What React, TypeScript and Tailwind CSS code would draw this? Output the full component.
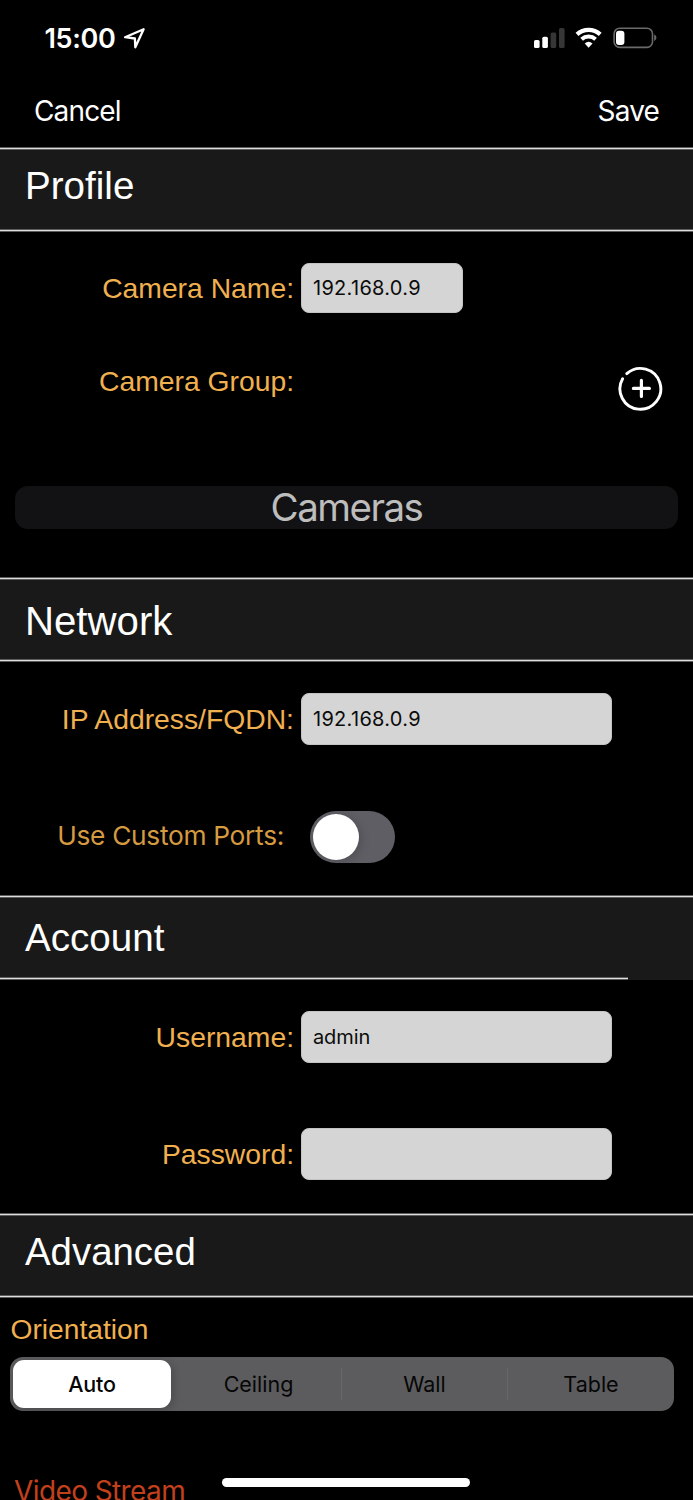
import type { ReactNode } from "react";
import clsx from "clsx";

const segments = ["Auto", "Ceiling", "Wall", "Table"];

function Rule({ className }: { className?: string }) {
  return <div className={clsx("h-[3px] border-y border-[#5c5c5c] bg-[#dedede]", className)} />;
}

function SectionHeader({
  title,
  className,
  ruleClassName,
}: {
  title: string;
  className: string;
  ruleClassName?: string;
}) {
  return (
    <header className="flex h-[85px] flex-col bg-[#191919]">
      <Rule />
      <h2
        className={clsx(
          "h-[79px] whitespace-nowrap pl-[25px] font-['Liberation_Sans',sans-serif] leading-[40px] text-white",
          className,
        )}
      >
        {title}
      </h2>
      <Rule className={ruleClassName} />
    </header>
  );
}

function Field({
  label,
  className,
  children,
}: {
  label: string;
  className?: string;
  children?: ReactNode;
}) {
  return (
    <div className={clsx("flex items-center", className)}>
      <span className="w-[295px] whitespace-nowrap pr-px text-right font-['Liberation_Sans',sans-serif] text-[28.3px] leading-8 text-[#f0b04f]">
        {label}
      </span>
      {children}
    </div>
  );
}

function TextBox({ value, className }: { value: string; className: string }) {
  return (
    <input
      readOnly
      value={value}
      className={clsx(
        "ml-[6.4px] rounded-lg border border-[#c4c4c4] bg-[#d5d5d5] pl-[10.6px] text-[20px] text-[#0c0c0c] outline-none",
        className,
      )}
    />
  );
}

function StatusBar() {
  return (
    <div className="flex h-[76px] items-center pl-[44.5px] pr-[36px] text-white">
      <span className="text-[27px] font-semibold leading-none tracking-[-0.3px]">15:00</span>
      <svg className="ml-[7px] h-[24px] w-[24px]" viewBox="0 0 24 24" fill="none">
        <path
          d="M20.6 3.2 2.1 11.2l9.8 1.3.4 8.8z"
          stroke="currentColor"
          strokeWidth="2.3"
          strokeLinejoin="round"
        />
      </svg>
      <svg className="ml-auto h-[24px] w-[124px]" viewBox="0 0 124 24" fill="none">
        <rect x="1" y="14" width="5.6" height="8" rx="1.6" fill="#fff" />
        <rect x="9.3" y="10.7" width="5.6" height="11.3" rx="1.6" fill="#fff" />
        <rect x="17.6" y="6.5" width="5.6" height="15.5" rx="1.6" fill="#363636" />
        <rect x="26" y="2" width="5.6" height="20" rx="1.6" fill="#363636" />
        <path d="M44 8.4a17.4 17.4 0 0 1 23.2 0" stroke="#fff" strokeWidth="4.3" />
        <path d="M48.6 13.2a10.6 10.6 0 0 1 14 0" stroke="#fff" strokeWidth="4" />
        <path d="M51.7 17.4a6.2 6.2 0 0 1 7.8 0l-3.9 4.3z" fill="#fff" />
        <rect x="81.1" y="2.2" width="38.4" height="19.2" rx="5.6" stroke="#6a6a6a" strokeWidth="1.6" />
        <rect x="83" y="4.8" width="8.4" height="14.2" rx="3" fill="#fff" />
        <path d="M121.2 8.6c2.9 1.3 2.9 5.1 0 6.4z" fill="#6a6a6a" />
      </svg>
    </div>
  );
}

function AddIcon() {
  return (
    <svg className="h-[46px] w-[46px]" viewBox="0 0 46 46" fill="none">
      <path
        d="M8.8 8.6A20.4 20.4 0 1 1 4.6 13.8"
        stroke="#fff"
        strokeWidth="2.9"
        strokeLinecap="round"
      />
      <path d="M23.4 15.4v16M15.4 23.4h16" stroke="#fff" strokeWidth="3.2" strokeLinecap="round" />
    </svg>
  );
}

export default function App() {
  return (
    <div className="relative h-[1500px] w-[693px] overflow-hidden bg-black font-['Inter',sans-serif]">
      <StatusBar />
      <nav className="flex h-[71px] items-center justify-between px-[34px] pb-[2px] text-[28px] leading-none tracking-[-0.85px] text-white">
        <button>Cancel</button>
        <button>Save</button>
      </nav>

      <SectionHeader title="Profile" className="pt-[16px] text-[38.6px]" />
      <section className="h-[345px] pt-[31px]">
        <Field label="Camera Name:">
          <TextBox value="192.168.0.9" className="h-[50px] w-[162px] tracking-[0.3px]" />
        </Field>
        <div className="mt-[52px] flex h-[46px] justify-between pr-[29px]">
          <Field label="Camera Group:" className="h-8" />
          <button aria-label="Add group">
            <AddIcon />
          </button>
        </div>
        <button className="mx-[15px] mt-[75px] block h-[43px] w-[663px] rounded-[13px] bg-[#121214] text-[38.5px] leading-[43px] tracking-[-1.5px] text-[#bdbdbd]">
          Cameras
        </button>
      </section>

      <SectionHeader title="Network" className="pt-[22px] text-[40.2px]" />
      <section className="h-[233px] pt-[31px]">
        <Field label="IP Address/FQDN:">
          <TextBox value="192.168.0.9" className="h-[52px] w-[311px] tracking-[0.3px]" />
        </Field>
        <div className="mt-[66px] flex h-[52px] items-center">
          <span className="w-[284px] whitespace-nowrap pb-[2px] text-right text-[26.3px] leading-none tracking-[-0.3px] text-[#d69a40]">
            Use Custom Ports:
          </span>
          <button
            role="switch"
            aria-checked={false}
            aria-label="Use custom ports"
            className="ml-[26px] h-[52px] w-[85px] rounded-full bg-[#5f5e65] pl-[2.5px]"
          >
            <span className="block size-[46px] rounded-full bg-white shadow-[3px_2px_8px_rgba(0,0,0,0.15)]" />
          </button>
        </div>
      </section>

      <SectionHeader title="Account" className="pt-[20px] text-[38.6px]" ruleClassName="w-[628px]" />
      <section className="h-[233px] pt-[31px]">
        <Field label="Username:">
          <TextBox value="admin" className="h-[52px] w-[311px] tracking-[-0.1px]" />
        </Field>
        <Field label="Password:" className="mt-[65px]">
          <TextBox value="" className="h-[52px] w-[311px]" />
        </Field>
      </section>

      <SectionHeader title="Advanced" className="pt-[16px] text-[38.4px]" />
      <section className="pl-[10px] pt-[15px]">
        <h3 className="h-[44px] pl-[0.5px] font-['Liberation_Sans',sans-serif] text-[28.2px] leading-8 text-[#f0b04f]">
          Orientation
        </h3>
        <div className="flex h-[54px] w-[664px] items-center rounded-[13px] bg-[#5c5c5e] px-[3px] text-[21.5px] text-[#060606]">
          {segments.map((name, i) => (
            <button
              key={name}
              className={clsx(
                "shrink-0",
                i === 0
                  ? "mr-[5px] h-[48px] w-[158px] rounded-[11px] bg-white font-medium tracking-[-0.2px] shadow-[2px_2px_8px_rgba(0,0,0,0.2)]"
                  : "h-[32px] w-[166px] pb-[2px]",
                (i === 1 || i === 2) && "border-r border-[#68686a]",
              )}
            >
              {name}
            </button>
          ))}
        </div>
        <h3 className="mt-[64px] pl-[4px] text-[28px] leading-8 tracking-[-0.6px] text-[#c2401c]">
          Video Stream
        </h3>
      </section>

      <div className="absolute bottom-[13px] left-[222px] h-[9px] w-[248px] rounded-full bg-white" />
    </div>
  );
}
